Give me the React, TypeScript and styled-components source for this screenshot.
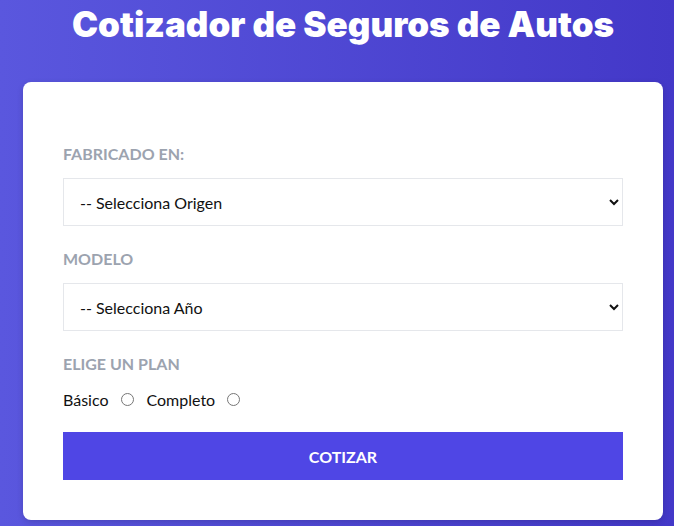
import styled, { createGlobalStyle } from 'styled-components';

const GlobalStyle = createGlobalStyle`
  * { box-sizing: border-box; }
  body {
    margin: 0;
    font-family: Lato, "Open Sans", sans-serif;
    background: linear-gradient(90deg, #5a57de 0%, #4338c8 100%);
    min-height: 100vh;
  }
`;

const plans = [
  { id: 'basico', name: 'Básico' },
  { id: 'completo', name: 'Completo' },
];

const App = () => {
  return (
    <>
      <GlobalStyle />
      <S.Page>
        <S.Title>Cotizador de Seguros de Autos</S.Title>
        <S.Card>
          <S.Form>
            <S.Field>
              <S.Label>Fabricado en:</S.Label>
              <S.Select defaultValue="">
                <option value="">-- Selecciona Origen</option>
              </S.Select>
            </S.Field>
            <S.Field>
              <S.Label>Modelo</S.Label>
              <S.Select defaultValue="">
                <option value="">-- Selecciona Año</option>
              </S.Select>
            </S.Field>
            <S.Field>
              <S.Label>Elige un plan</S.Label>
              <S.Radios>
                {plans.map((plan) => (
                  <S.RadioItem key={plan.id}>
                    {plan.name}
                    <S.Radio type="radio" name="plan" value={plan.id} />
                  </S.RadioItem>
                ))}
              </S.Radios>
            </S.Field>
            <S.Button type="button">Cotizar</S.Button>
          </S.Form>
        </S.Card>
      </S.Page>
    </>
  );
};

const S = {
  Page: styled.div`
    display: flex;
    flex-direction: column;
    align-items: center;
    padding: 0 0 0 12px;
  `,
  Title: styled.h1`
    margin: 4px 0 38px;
    font-family: Inter, "Noto Sans", sans-serif;
    font-weight: 900;
    font-size: 35px;
    line-height: 40px;
    color: #ffffff;
    text-align: center;
  `,
  Card: styled.div`
    width: 640px;
    background-color: #ffffff;
    border-radius: 8px;
    box-shadow: 0 2px 6px rgba(0, 0, 0, 0.15);
    padding: 60px 40px 40px;
  `,
  Form: styled.form`
    display: flex;
    flex-direction: column;
    gap: 21px;
  `,
  Field: styled.div`
    display: flex;
    flex-direction: column;
    gap: 12px;
  `,
  Label: styled.label`
    font-size: 16px;
    line-height: 24px;
    font-weight: 700;
    text-transform: uppercase;
    color: #9ca3af;
  `,
  Select: styled.select`
    width: 100%;
    height: 48px;
    padding: 0 12px;
    border: 1px solid #e5e7eb;
    border-radius: 0;
    background-color: #ffffff;
    font-family: Lato, "Open Sans", sans-serif;
    font-size: 16px;
    color: #111111;
  `,
  Radios: styled.div`
    display: flex;
    align-items: center;
    gap: 13px;
    height: 22px;
  `,
  RadioItem: styled.label`
    display: flex;
    align-items: center;
    gap: 12px;
    font-size: 16px;
    color: #111111;
  `,
  Radio: styled.input`
    margin: 0;
    width: 13px;
    height: 13px;
  `,
  Button: styled.button`
    margin-top: 1px;
    width: 100%;
    height: 48px;
    border: none;
    background-color: #4f46e5;
    color: #ffffff;
    font-family: Lato, "Open Sans", sans-serif;
    font-size: 16px;
    font-weight: 700;
    text-transform: uppercase;
    cursor: pointer;
  `,
};

export default App;
